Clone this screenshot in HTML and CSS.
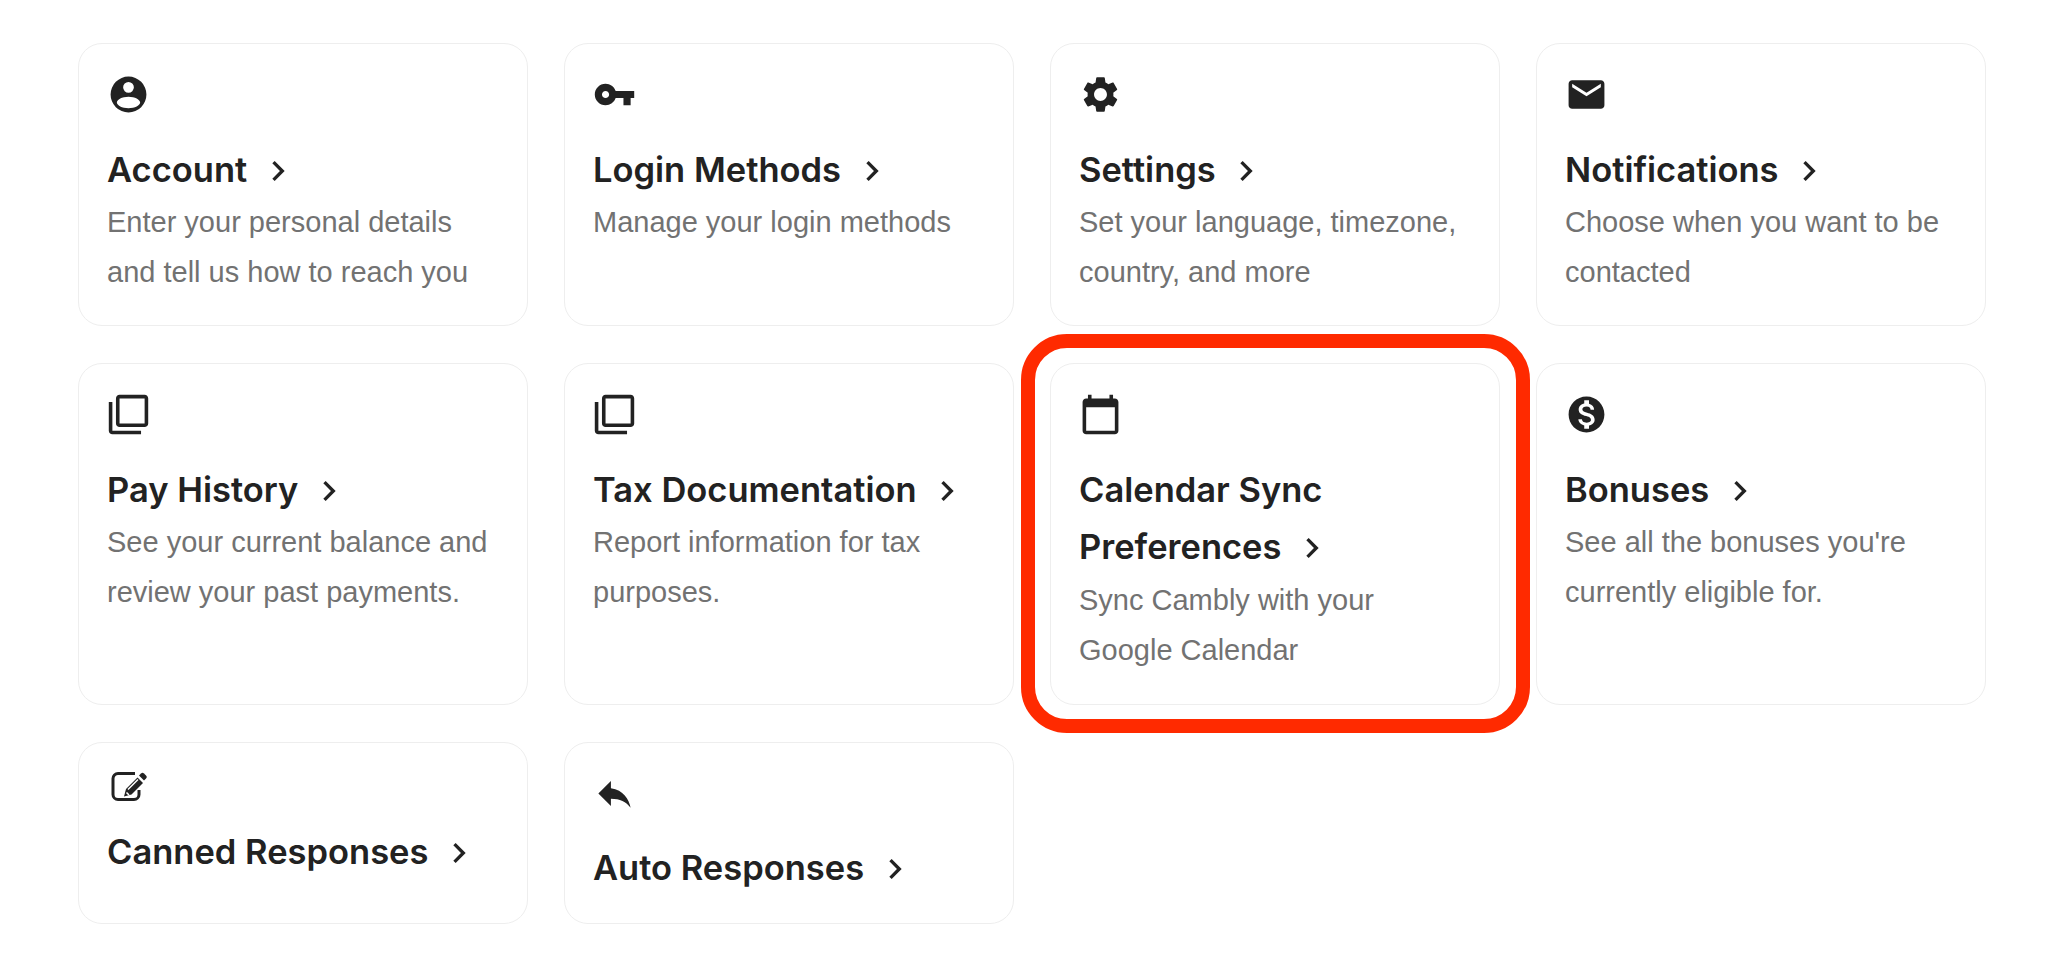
FILE: index.html
```html
<!DOCTYPE html>
<html lang="en">
<head>
<meta charset="utf-8">
<title>Account settings</title>
<link rel="stylesheet" href="styles.css">
</head>
<body>
<main class="grid">
  <a class="card">
    <svg class="icon" viewBox="0 0 24 24"><path fill-rule="evenodd" d="M12 2a10 10 0 1 0 0 20a10 10 0 1 0 0-20zM12 5a3 3 0 1 1 0 6a3 3 0 1 1 0-6zM12 13.300c3.600 0 6.500 1.600 6.500 3.200s-2.900 3.200-6.500 3.200s-6.500-1.600-6.500-3.200s2.900-3.200 6.500-3.200z"/></svg>
    <h2 class="title">Account <svg class="chev" viewBox="0 0 24 24"><path d="M10 6L8.590 7.410 13.170 12l-4.580 4.590L10 18l6-6z"/></svg></h2>
    <p class="desc">Enter your personal details and tell us how to reach you</p>
  </a>
  <a class="card">
    <svg class="icon" viewBox="0 0 24 24"><path d="M12.650 10C11.830 7.670 9.610 6 7 6c-3.310 0-6 2.690-6 6s2.690 6 6 6c2.610 0 4.830-1.670 5.650-4H17v4h4v-4h2v-4H12.650zM7 14c-1.100 0-2-.9-2-2s.9-2 2-2 2 .9 2 2-.9 2-2 2z"/></svg>
    <h2 class="title">Login Methods <svg class="chev" viewBox="0 0 24 24"><path d="M10 6L8.590 7.410 13.170 12l-4.580 4.590L10 18l6-6z"/></svg></h2>
    <p class="desc">Manage your login methods</p>
  </a>
  <a class="card">
    <svg class="icon" viewBox="0 0 24 24"><path d="M19.140 12.940c.04-.3.06-.61.06-.94 0-.32-.02-.64-.07-.94l2.030-1.580c.18-.14.23-.41.12-.61l-1.920-3.320c-.12-.22-.37-.29-.59-.22l-2.390.96c-.5-.38-1.030-.7-1.620-.94l-.36-2.540c-.04-.24-.24-.41-.48-.41h-3.840c-.24 0-.43.17-.47.41l-.36 2.540c-.59.24-1.130.57-1.620.94l-2.390-.96c-.22-.08-.47 0-.59.22L2.740 8.870c-.12.21-.08.47.12.61l2.030 1.580c-.05.3-.09.63-.09.94s.02.64.07.94l-2.030 1.580c-.18.14-.23.41-.12.61l1.920 3.320c.12.22.37.29.59.22l2.390-.96c.5.38 1.030.7 1.620.94l.36 2.540c.05.24.24.41.48.41h3.840c.24 0 .44-.17.47-.41l.36-2.540c.59-.24 1.130-.56 1.620-.94l2.390.96c.22.08.47 0 .59-.22l1.920-3.320c.12-.22.07-.47-.12-.61l-2.010-1.580zM12 15.600c-1.980 0-3.600-1.620-3.600-3.600s1.620-3.600 3.600-3.600 3.600 1.620 3.600 3.600-1.620 3.600-3.600 3.600z"/></svg>
    <h2 class="title">Settings <svg class="chev" viewBox="0 0 24 24"><path d="M10 6L8.590 7.410 13.170 12l-4.580 4.590L10 18l6-6z"/></svg></h2>
    <p class="desc">Set your language, timezone, country, and more</p>
  </a>
  <a class="card">
    <svg class="icon" viewBox="0 0 24 24"><path d="M20 4H4c-1.100 0-1.990.9-1.990 2L2 18c0 1.100.9 2 2 2h16c1.100 0 2-.9 2-2V6c0-1.100-.9-2-2-2zm0 4l-8 5-8-5V6l8 5 8-5v2z"/></svg>
    <h2 class="title">Notifications <svg class="chev" viewBox="0 0 24 24"><path d="M10 6L8.590 7.410 13.170 12l-4.580 4.590L10 18l6-6z"/></svg></h2>
    <p class="desc">Choose when you want to be contacted</p>
  </a>
  <a class="card">
    <svg class="icon" viewBox="0 0 24 24"><path d="M3 5H1v16c0 1.100.9 2 2 2h16v-2H3V5zm18-4H7c-1.100 0-2 .9-2 2v14c0 1.100.9 2 2 2h14c1.100 0 2-.9 2-2V3c0-1.100-.9-2-2-2zm0 16H7V3h14v14z"/></svg>
    <h2 class="title">Pay History <svg class="chev" viewBox="0 0 24 24"><path d="M10 6L8.590 7.410 13.170 12l-4.580 4.590L10 18l6-6z"/></svg></h2>
    <p class="desc">See your current balance and review your past payments.</p>
  </a>
  <a class="card">
    <svg class="icon" viewBox="0 0 24 24"><path d="M3 5H1v16c0 1.100.9 2 2 2h16v-2H3V5zm18-4H7c-1.100 0-2 .9-2 2v14c0 1.100.9 2 2 2h14c1.100 0 2-.9 2-2V3c0-1.100-.9-2-2-2zm0 16H7V3h14v14z"/></svg>
    <h2 class="title">Tax Documentation <svg class="chev" viewBox="0 0 24 24"><path d="M10 6L8.590 7.410 13.170 12l-4.580 4.590L10 18l6-6z"/></svg></h2>
    <p class="desc">Report information for tax purposes.</p>
  </a>
  <a class="card card-marked">
    <svg class="icon" viewBox="0 0 24 24"><path d="M20 3h-1V1h-2v2H7V1H5v2H4c-1.100 0-2 .9-2 2v16c0 1.100.9 2 2 2h16c1.100 0 2-.9 2-2V5c0-1.100-.9-2-2-2zm0 18H4V8h16v13z"/></svg>
    <h2 class="title">Calendar Sync Preferences <svg class="chev" viewBox="0 0 24 24"><path d="M10 6L8.590 7.410 13.170 12l-4.580 4.590L10 18l6-6z"/></svg></h2>
    <p class="desc">Sync Cambly with your Google Calendar</p>
    <span class="marker"></span>
  </a>
  <a class="card">
    <svg class="icon" viewBox="0 0 24 24"><path d="M12 2C6.480 2 2 6.480 2 12s4.480 10 10 10 10-4.480 10-10S17.520 2 12 2zm1.410 16.090V20h-2.670v-1.930c-1.710-.36-3.160-1.460-3.270-3.400h1.960c.1 1.050.82 1.870 2.650 1.870 1.960 0 2.400-.98 2.400-1.590 0-.83-.44-1.610-2.670-2.140-2.480-.6-4.180-1.620-4.180-3.670 0-1.720 1.390-2.840 3.110-3.210V4h2.670v1.950c1.860.45 2.790 1.860 2.850 3.390H14.300c-.05-1.110-.64-1.870-2.220-1.870-1.500 0-2.400.68-2.400 1.640 0 .84.65 1.390 2.670 1.910s4.180 1.390 4.180 3.910c-.01 1.830-1.380 2.830-3.120 3.160z"/></svg>
    <h2 class="title">Bonuses <svg class="chev" viewBox="0 0 24 24"><path d="M10 6L8.590 7.410 13.170 12l-4.580 4.590L10 18l6-6z"/></svg></h2>
    <p class="desc">See all the bonuses you're currently eligible for.</p>
  </a>
  <a class="card card-short">
    <svg class="icon-edit" viewBox="0 0 43 29">
      <path class="edit-box" d="M28 1.500H11a5 5 0 0 0-5 5V22.500a5 5 0 0 0 5 5H27a5 5 0 0 0 5-5V18"/>
      <path d="M17 24.500L19 17 30.500 5.500 36 11 24.500 22.500z"/>
      <path d="M32 3.500 34 1.500c1-1 2-1 3 0l2 2c1 1 1 2 0 3l-2 2z"/>
      <path class="edit-tip" d="M19.500 20.500l2.500 2.500M21 17.500l10-10"/>
    </svg>
    <h2 class="title">Canned Responses <svg class="chev" viewBox="0 0 24 24"><path d="M10 6L8.590 7.410 13.170 12l-4.580 4.590L10 18l6-6z"/></svg></h2>
  </a>
  <a class="card card-short">
    <svg class="icon" viewBox="0 0 24 24"><path d="M10 9V5l-7 7 7 7v-4.100c5 0 8.500 1.600 11 5.100-1-5-4-10-11-11z"/></svg>
    <h2 class="title">Auto Responses <svg class="chev" viewBox="0 0 24 24"><path d="M10 6L8.590 7.410 13.170 12l-4.580 4.590L10 18l6-6z"/></svg></h2>
  </a>
</main>
</body>
</html>
```
FILE: styles.css
```css
* { box-sizing: border-box; }
html, body { margin: 0; padding: 0; background: #fff; }
body { font-family: "Liberation Sans", Arial, sans-serif; color: #222; }
.grid {
  display: grid;
  grid-template-columns: repeat(4, 450px);
  column-gap: 36px;
  row-gap: 37px;
  padding: 43px 0 0 78px;
}
.card {
  position: relative;
  display: block;
  padding: 29px 28px 28px 28px;
  background: #fff;
  border: 1px solid #eee;
  border-radius: 24px;
}
.card-marked { padding-bottom: 29px; }
.card-short { padding-bottom: 27px; }
.icon { display: block; width: 43px; height: 43px; fill: #222; margin-bottom: 25px; }
.card-short .icon { margin-bottom: 24px; }
.icon-edit { display: block; width: 43px; height: 29px; fill: #222; margin-bottom: 22px; }
.edit-box { fill: none; stroke: #222; stroke-width: 3; }
.edit-tip { fill: none; stroke: #fff; stroke-width: 1.5; }
.title {
  margin: 0 0 -1px;
  font-family: Inter, "Liberation Sans", sans-serif;
  font-size: 34.5px;
  line-height: 57px;
  font-weight: 600;
  color: #222;
}
.card-marked .title, .card-short .title { margin-bottom: 0; }
.chev { width: 40px; height: 40px; margin-left: 2px; fill: #222; vertical-align: -9px; }
.desc {
  margin: 0;
  font-size: 29px;
  line-height: 50px;
  color: #727272;
}
.marker {
  position: absolute;
  top: -30px;
  right: -31px;
  bottom: -29px;
  left: -30px;
  border: 14px solid #ff2a00;
  border-radius: 46px;
  pointer-events: none;
}
```
